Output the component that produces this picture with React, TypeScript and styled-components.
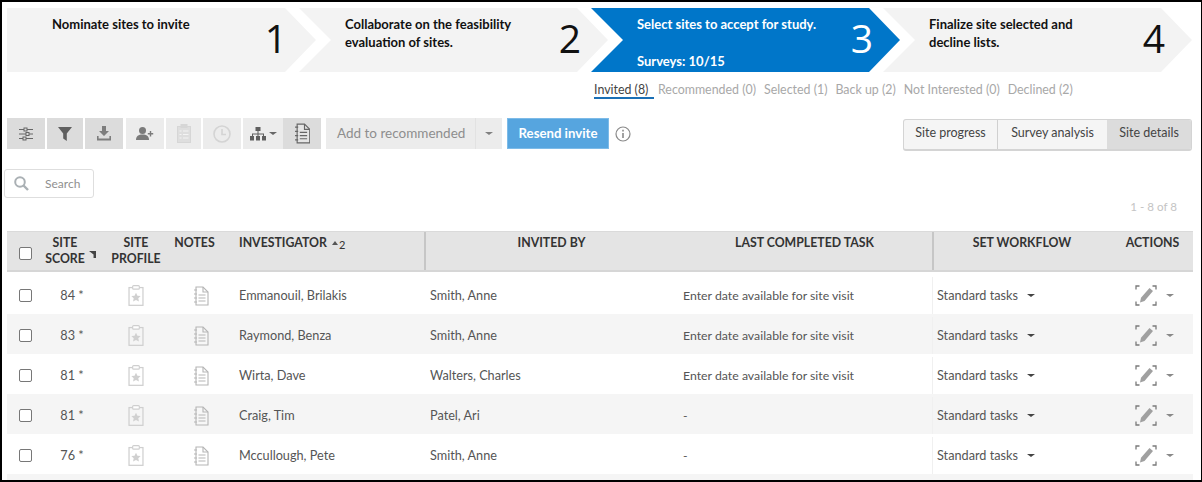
import React from 'react'
import styled, { createGlobalStyle } from 'styled-components'

const GlobalStyle = createGlobalStyle`
  html, body {
    margin: 0;
    padding: 0;
    background: #fff;
    overflow: hidden;
  }
  * {
    box-sizing: border-box;
  }
`

const Frame = styled.div`
  width: 1202px;
  height: 482px;
  border: 2px solid #000;
  border-right-width: 1px;
  overflow: hidden;
  background: #fff;
  font-family: 'Lato', 'Noto Sans', sans-serif;
  font-size: 12px;
  color: #3f3f3f;
`

const Steps = styled.div`
  display: flex;
  margin: 6px 0 0 5px;
  height: 64px;
`

const Step = styled.div<{ $active?: boolean; $first?: boolean }>`
  width: 309px;
  height: 64px;
  margin-left: ${({ $first }) => ($first ? 0 : -17)}px;
  padding: 7px ${({ $first }) => ($first ? 29 : 27)}px 0 ${({ $first }) => ($first ? 45 : 46)}px;
  display: flex;
  justify-content: space-between;
  background: ${({ $active }) => ($active ? '#0076c9' : '#f3f3f3')};
  color: ${({ $active }) => ($active ? '#fff' : '#111')};
  clip-path: polygon(
    ${({ $first }) =>
      $first
        ? '0 0, 278px 0, 100% 50%, 278px 100%, 0 100%'
        : '0 0, 278px 0, 100% 50%, 278px 100%, 0 100%, 32px 50%'}
  );
`

const StepText = styled.div`
  width: 186px;
  display: flex;
  flex-direction: column;
  justify-content: space-between;
  height: 55px;
  font-size: 13px;
  font-weight: 700;
  line-height: 18px;
`

const StepNumber = styled.div`
  font-size: 39px;
  font-weight: 400;
  line-height: 45px;
  font-family: 'Open Sans', 'Noto Sans', sans-serif;
`

const Tabs = styled.div`
  display: flex;
  gap: 8px;
  margin: 9px 0 0 592px;
  height: 18px;
  font-size: 12.4px;
  color: #a8a8a8;
`

const Tab = styled.div<{ $active?: boolean }>`
  height: 18px;
  width: ${({ $active }) => ($active ? '60px' : 'auto')};
  margin-right: ${({ $active }) => ($active ? -4 : 0)}px;
  line-height: 17px;
  white-space: nowrap;
  color: ${({ $active }) => ($active ? '#444' : '#a8a8a8')};
  border-bottom: ${({ $active }) => ($active ? '2px solid #1a6fb5' : 'none')};
`

const Toolbar = styled.div`
  display: flex;
  align-items: stretch;
  height: 31px;
  margin: 19px 9px 0 5px;
`

const IconButton = styled.div<{ $tone: 'dark' | 'light'; $width?: number; $gap?: number }>`
  width: ${({ $width }) => $width ?? 38}px;
  margin-right: ${({ $gap }) => $gap ?? 2}px;
  display: flex;
  align-items: center;
  justify-content: center;
  gap: 3px;
  background: ${({ $tone }) => ($tone === 'dark' ? '#dcdcdc' : '#ececec')};
  flex: none;
`

const SplitButton = styled.div`
  display: flex;
  width: 176px;
  margin-left: 3px;
  background: #ececec;
  color: #8e8e8e;
  font-size: 13.5px;
  line-height: 30px;
`

const SplitLabel = styled.div`
  width: 150px;
  padding-left: 11px;
  border-right: 1px solid #e2e2e2;
  white-space: nowrap;
`

const SplitCaret = styled.div`
  flex: 1;
  display: flex;
  align-items: center;
  justify-content: center;
`

const Caret = styled.span<{ $color?: string; $size?: number }>`
  display: inline-block;
  width: 0;
  height: 0;
  border-left: ${({ $size }) => $size ?? 4}px solid transparent;
  border-right: ${({ $size }) => $size ?? 4}px solid transparent;
  border-top: ${({ $size }) => ($size ?? 4) - 0.5}px solid ${({ $color }) => $color ?? '#777'};
`

const PrimaryButton = styled.div`
  width: 102px;
  margin-left: 5px;
  background: #56a5df;
  border: 1px solid #7dbbe8;
  color: #fff;
  font-size: 13.2px;
  font-weight: 700;
  line-height: 28px;
  text-align: center;
`

const InfoIcon = styled.div`
  width: 16px;
  margin-left: 6px;
  display: flex;
  align-items: center;
`

const Segments = styled.div`
  display: flex;
  margin-left: auto;
  height: 32px;
  border: 1px solid #d4d4d4;
  border-bottom-width: 2px;
  border-radius: 3px;
  overflow: hidden;
  background: #f5f5f5;
  margin-top: 1px;
`

const Segment = styled.div<{ $width: number; $active?: boolean; $line?: boolean }>`
  width: ${({ $width }) => $width}px;
  text-align: center;
  line-height: 26px;
  font-size: 12.5px;
  color: #444;
  background: ${({ $active }) => ($active ? '#dcdcdc' : 'transparent')};
  border-right: ${({ $line }) => ($line ? '1px solid #d0d0d0' : 'none')};
`

const SearchBox = styled.div`
  display: flex;
  align-items: center;
  width: 90px;
  height: 29px;
  margin: 20px 0 0 2px;
  padding: 0 0 1px 9px;
  border: 1px solid #dedede;
  border-radius: 3px;
  color: #8f8f8f;
  gap: 16px;
`

const Count = styled.div`
  height: 33px;
  line-height: 17px;
  padding-right: 24px;
  text-align: right;
  font-size: 11.6px;
  color: #c4c4c4;
`

const columns = '33px 70px 60px 59px 195px 249px 259px 174px 87px'

const HeaderRow = styled.div`
  display: grid;
  grid-template-columns: ${columns};
  width: 1186px;
  height: 41px;
  margin-left: 5px;
  background: #e4e4e4;
  border-top: 1px solid #dadada;
  border-bottom: 2px solid #d6d6d6;
  color: #333;
  font-weight: 700;
  font-size: 12.3px;
  line-height: 16px;
`

// $nudge moves centred content sideways by that many pixels
const HeaderCell = styled.div<{ $align?: string; $line?: boolean; $pad?: number; $nudge?: number }>`
  padding-top: 3px;
  padding-left: ${({ $pad, $nudge }) => $pad ?? Math.max(($nudge ?? 0) * 2, 0)}px;
  padding-right: ${({ $nudge }) => Math.max(-($nudge ?? 0) * 2, 0)}px;
  text-align: ${({ $align }) => $align ?? 'center'};
  border-left: ${({ $line }) => ($line ? '2px solid #c6c6c6' : 'none')};
  white-space: nowrap;
  position: relative;
`

const CheckCell = styled.div<{ $drop?: number }>`
  display: flex;
  align-items: center;
  justify-content: center;
  padding-left: 4px;
  padding-top: ${({ $drop }) => $drop ?? 0}px;
`

const Check = styled.span`
  width: 13px;
  height: 13px;
  border: 1px solid #777;
  border-radius: 2px;
  background: #fff;
`

const SortMark = styled.span`
  position: absolute;
  top: 19px;
  right: 14px;
  width: 7px;
  height: 7px;
  background: #444;
  clip-path: polygon(0 0, 100% 0, 100% 100%, 65% 100%, 65% 50%);
`

const SortUp = styled.span`
  display: inline-block;
  width: 0;
  height: 0;
  margin: 0 1px 2px 5px;
  border-left: 3.5px solid transparent;
  border-right: 3.5px solid transparent;
  border-bottom: 4px solid #555;
`

const SortIndex = styled.span`
  font-weight: 400;
  font-size: 11px;
  position: relative;
  top: 2px;
`

const Body = styled.div`
  margin-left: 5px;
  width: 1186px;
  padding-top: 2px;
`

const Row = styled.div<{ $odd: boolean }>`
  display: grid;
  grid-template-columns: ${columns};
  height: 40px;
  padding-top: 3px;
  align-items: stretch;
  background: ${({ $odd }) => ($odd ? '#f5f5f5' : '#fff')};
  color: #555;
  font-size: 12.7px;
  line-height: 37px;
`

const Cell = styled.div<{ $center?: boolean; $pad?: number; $nudge?: number; $line?: boolean }>`
  padding-left: ${({ $pad, $nudge }) => $pad ?? Math.max(($nudge ?? 0) * 2, 0)}px;
  padding-right: ${({ $nudge }) => Math.max(-($nudge ?? 0) * 2, 0)}px;
  border-left: ${({ $line }) => ($line ? '1px solid #f0f0f0' : 'none')};
  white-space: nowrap;
  display: flex;
  align-items: center;
  justify-content: ${({ $center }) => ($center ? 'center' : 'flex-start')};
`

const TaskCell = styled(Cell)`
  font-size: 12.3px;
`

const ActionCell = styled(Cell)`
  gap: 9px;
  padding-left: 10px;
`

const WorkflowCaret = styled.span`
  margin-left: 9px;
  display: inline-flex;
`

const Slider = () => (
  <svg width="16" height="14" viewBox="0 0 16 14" fill="none" stroke="#666" strokeWidth="1">
    <path d="M1 2.5h14M1 7h14M1 11.5h14" />
    <rect x="6" y="1" width="3" height="3" fill="#dcdcdc" />
    <rect x="8" y="5.5" width="3" height="3" fill="#dcdcdc" />
    <rect x="5" y="10" width="3" height="3" fill="#dcdcdc" />
  </svg>
)

const Funnel = () => (
  <svg width="14" height="14" viewBox="0 0 14 14">
    <path d="M0 0h14L8.8 6.5V14L5.2 11.5V6.5z" fill="#5f5f5f" />
  </svg>
)

const Download = () => (
  <svg width="14" height="15" viewBox="0 0 14 15" fill="#7d7d7d">
    <path d="M5 0h4v5h3L7 10 2 5h3z" />
    <path d="M0 10h1.6v2.5h10.8V10H14v4.5H0z" />
  </svg>
)

const UserPlus = () => (
  <svg width="18" height="14" viewBox="0 0 18 14" fill="#7b7b7b">
    <circle cx="6.5" cy="3.5" r="3.5" />
    <path d="M0 13c0-4 2.5-5.5 6.5-5.5S13 9 13 13z" />
    <path d="M13.8 4h1.4v2h2v1.4h-2v2h-1.4v-2h-2V6h2z" />
  </svg>
)

const Checklist = () => (
  <svg width="14" height="19" viewBox="0 0 14 19" fill="none" stroke="#d6d6d6">
    <rect x="0.5" y="2.5" width="13" height="16" fill="#dedede" />
    <rect x="4" y="0.5" width="6" height="3" fill="#d6d6d6" />
    <path d="M2.5 7h2M6 7h5.5M2.5 10.5h2M6 10.5h5.5M2.5 14h2M6 14h5.5" stroke="#f4f4f4" />
  </svg>
)

const Clock = () => (
  <svg width="18" height="18" viewBox="0 0 18 18" fill="none" stroke="#d4d4d4" strokeWidth="1.6">
    <circle cx="9" cy="9" r="8" />
    <path d="M9 4v5.5h4" />
  </svg>
)

const Hierarchy = () => (
  <svg width="16" height="14" viewBox="0 0 16 14" fill="#5f5f5f">
    <rect x="5.5" y="0" width="5" height="4" />
    <path d="M7.5 4h1v2.5h5.5V9h-1V7.5H8.5V9h-1V7.5H3V9H2V6.5h5.5z" />
    <rect x="0" y="9" width="4" height="4.5" />
    <rect x="6" y="9" width="4" height="4.5" />
    <rect x="12" y="9" width="4" height="4.5" />
  </svg>
)

const Note = ({ stroke = '#777', size = 1 }: { stroke?: string; size?: number }) => (
  <svg width={16 * size} height={20 * size} viewBox="0 0 16 20" fill="none" stroke={stroke} strokeWidth="1.1">
    <path d="M3 1h7l5 5v13H3z" fill="#fff" fillOpacity="0.25" />
    <path d="M10 1v5h5" />
    <path d="M5.5 9h7M5.5 12h7M5.5 15h7" />
    <path d="M1 4h3M1 8h3M1 12h3M1 16h3" />
  </svg>
)

const ProfileIcon = () => (
  <svg width="16" height="21" viewBox="0 0 16 22" fill="none">
    <rect x="0.7" y="2.7" width="14.6" height="18.6" stroke="#cfcfcf" strokeWidth="1.3" />
    <rect x="4.5" y="0.7" width="7" height="3.6" rx="1" fill="#fff" stroke="#cfcfcf" strokeWidth="1.2" />
    <path d="M8 8l1.5 3.2 3.4.4-2.5 2.3.7 3.4L8 15.6l-3.1 1.7.7-3.4-2.5-2.3 3.4-.4z" fill="#d0d0d0" />
  </svg>
)

const EditIcon = () => (
  <svg width="22" height="21" viewBox="0 0 22 21" fill="none">
    <path d="M1 4.5V1h3.5M17.5 1H21v3.5M21 16.5V20h-3.5M4.5 20H1v-3.5" stroke="#7a7a7a" strokeWidth="1.3" />
    <path d="M14.5 3l3.5 3-8.5 10-4.5 1.5 1-4.8z" fill="#a0a0a0" />
  </svg>
)

const Magnifier = () => (
  <svg width="15" height="15" viewBox="0 0 15 15" fill="none" stroke="#aab0b4" strokeWidth="2">
    <circle cx="6" cy="6" r="4.8" />
    <path d="M9.5 9.5L14 14" strokeWidth="2.4" />
  </svg>
)

const Info = () => (
  <svg width="16" height="16" viewBox="0 0 16 16" fill="none" stroke="#8a8a8a" strokeWidth="1.2">
    <circle cx="8" cy="8" r="7" />
    <path d="M8 7v5" strokeWidth="1.6" />
    <path d="M8 3.8v1.8" strokeWidth="1.6" />
  </svg>
)

const steps = [
  { text: ['Nominate sites to invite'], number: 1 },
  { text: ['Collaborate on the feasibility evaluation of sites.'], number: 2 },
  { text: ['Select sites to accept for study.', 'Surveys: 10/15'], number: 3, active: true },
  { text: ['Finalize site selected and decline lists.'], number: 4 },
]

const tabs = ['Invited (8)', 'Recommended (0)', 'Selected (1)', 'Back up (2)', 'Not Interested (0)', 'Declined (2)']

const task = 'Enter date available for site visit'

const rows = [
  { score: '84 *', name: 'Emmanouil, Brilakis', by: 'Smith, Anne', task },
  { score: '83 *', name: 'Raymond, Benza', by: 'Smith, Anne', task },
  { score: '81 *', name: 'Wirta, Dave', by: 'Walters, Charles', task },
  { score: '81 *', name: 'Craig, Tim', by: 'Patel, Ari', task: '-' },
  { score: '76 *', name: 'Mccullough, Pete', by: 'Smith, Anne', task: '-' },
  { score: '', name: '', by: '', task: '' },
]

const App = () => (
  <Frame>
    <GlobalStyle />
    <Steps>
      {steps.map((step, i) => (
        <Step key={step.number} $active={step.active} $first={i === 0}>
          <StepText>
            {step.text.map((line) => (
              <span key={line}>{line}</span>
            ))}
          </StepText>
          <StepNumber>{step.number}</StepNumber>
        </Step>
      ))}
    </Steps>

    <Tabs>
      {tabs.map((tab, i) => (
        <Tab key={tab} $active={i === 0}>
          {tab}
        </Tab>
      ))}
    </Tabs>

    <Toolbar>
      <IconButton $tone="dark"><Slider /></IconButton>
      <IconButton $tone="dark" $width={36}><Funnel /></IconButton>
      <IconButton $tone="dark" $gap={3}><Download /></IconButton>
      <IconButton $tone="light"><UserPlus /></IconButton>
      <IconButton $tone="light" $width={35}><Checklist /></IconButton>
      <IconButton $tone="light"><Clock /></IconButton>
      <IconButton $tone="light" $width={40} $gap={0}>
        <Hierarchy />
        <Caret $color="#666" />
      </IconButton>
      <IconButton $tone="dark"><Note stroke="#666" size={1.05} /></IconButton>
      <SplitButton>
        <SplitLabel>Add to recommended</SplitLabel>
        <SplitCaret><Caret $color="#808080" /></SplitCaret>
      </SplitButton>
      <PrimaryButton>Resend invite</PrimaryButton>
      <InfoIcon><Info /></InfoIcon>
      <Segments>
        <Segment $width={94} $line>Site progress</Segment>
        <Segment $width={109}>Survey analysis</Segment>
        <Segment $width={84} $active>Site details</Segment>
      </Segments>
    </Toolbar>

    <SearchBox>
      <Magnifier />
      Search
    </SearchBox>

    <Count>1 - 8 of 8</Count>

    <HeaderRow>
      <CheckCell $drop={4}><Check /></CheckCell>
      <HeaderCell $nudge={-10}>
        SITE
        <br />
        SCORE
        <SortMark />
      </HeaderCell>
      <HeaderCell $nudge={-4}>
        SITE
        <br />
        PROFILE
      </HeaderCell>
      <HeaderCell $nudge={-5}>NOTES</HeaderCell>
      <HeaderCell $align="left" $pad={10}>
        INVESTIGATOR
        <SortUp />
        <SortIndex>2</SortIndex>
      </HeaderCell>
      <HeaderCell $line $nudge={2}>INVITED BY</HeaderCell>
      <HeaderCell $nudge={2}>LAST COMPLETED TASK</HeaderCell>
      <HeaderCell $line $nudge={2}>SET WORKFLOW</HeaderCell>
      <HeaderCell $nudge={3}>ACTIONS</HeaderCell>
    </HeaderRow>

    <Body>
      {rows.map((row, i) => (
        <Row key={i} $odd={i % 2 === 1}>
          {row.name ? (
            <>
              <CheckCell><Check /></CheckCell>
              <Cell $center $nudge={-3}>{row.score}</Cell>
              <Cell $center $nudge={-4}><ProfileIcon /></Cell>
              <Cell $center $nudge={1}><Note stroke="#b5b5b5" /></Cell>
              <Cell $pad={10}>{row.name}</Cell>
              <Cell $pad={6}>{row.by}</Cell>
              <TaskCell $pad={10}>{row.task}</TaskCell>
              <Cell $pad={4} $line>
                Standard tasks
                <WorkflowCaret><Caret $color="#444" /></WorkflowCaret>
              </Cell>
              <ActionCell $center>
                <EditIcon />
                <Caret $color="#888" />
              </ActionCell>
            </>
          ) : null}
        </Row>
      ))}
    </Body>
  </Frame>
)

export default App
